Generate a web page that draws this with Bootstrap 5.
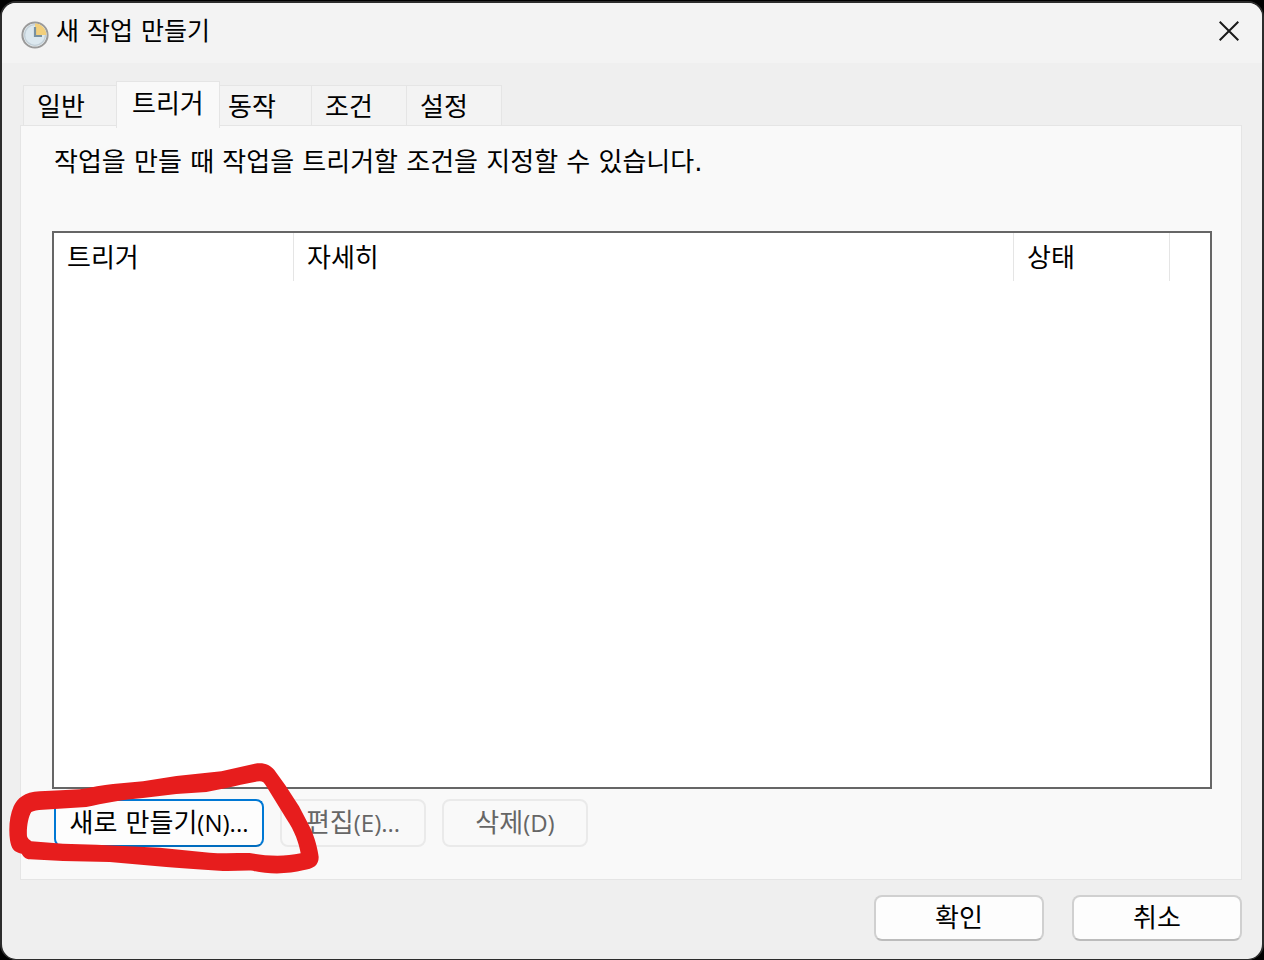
<!DOCTYPE html>
<html lang="ko">
<head>
<meta charset="utf-8">
<meta name="viewport" content="width=device-width, initial-scale=1">
<title>새 작업 만들기</title>
<link href="https://cdn.jsdelivr.net/npm/bootstrap@5.3.0/dist/css/bootstrap.min.css" rel="stylesheet">
<style>
  body { background: #000; color: #000; font-family: "DejaVu Sans", "Noto Sans CJK KR", sans-serif; font-size: 26px; line-height: 32px; padding: 1px 0 0; }
  .dialog-window { min-height: calc(100vh - 1px); background: #efefef; border: 2px solid #2c2c2c; border-bottom-width: 1px; border-radius: 16px; overflow: hidden; }
  .title-bar { background: #f3f3f3; height: 60px; padding: 0 17px 0 18px; }
  .title-bar h1 { font-size: 25px; line-height: 32px; padding: 0 0 2px 6px; }
  .close-btn { width: 32px; height: 32px; margin-bottom: 4px; }
  .dialog-main { padding: 18px 20px 15px 18px; }
  .tab-strip { padding-left: 3px; border: 0; margin-bottom: -1px; }
  .tab-strip .nav-link { width: 96px; height: 41px; margin: 0 0 0 -1px; padding: 2px 13px 0; line-height: 32px; text-align: left; color: #000; background: #f3f3f3; border: 1px solid #e5e5e5; border-radius: 0; }
  .tab-strip .nav-link.first-tab { width: 94px; margin: 0; }
  .tab-strip .nav-link.after-active { width: 93px; padding-left: 8px; }
  .tab-strip .nav-link.active { position: relative; z-index: 1; width: 104px; height: 47px; padding: 0 15px 2px; margin-bottom: -2px; color: #000; background: #f9f9f9; border-color: #e5e5e5; border-bottom: 0; }
  .tab-panel { background: #f9f9f9; border: 1px solid #e5e5e5; padding: 20px 29px 32px 31px; }
  .tab-panel p { padding-left: 2px; margin-bottom: 53px; }
  .trigger-list { background: #fff; border: 2px solid #666; }
  .trigger-list table { table-layout: fixed; border-collapse: separate; border-spacing: 0; }
  .trigger-list th { height: 48px; padding: 2px 12px 0 13px; font-weight: 400; border-right: 1px solid #e5e5e5; }
  .trigger-list th:last-child { border: 0; }
  .col-trigger { width: 240px; }
  .col-state { width: 156px; }
  .col-rest { width: 40px; }
  .win-btn { font-size: 26px; line-height: 32px; color: #000; background: #fdfdfd; border: 2px solid #d0d0d0; border-bottom-color: #bcbcbc; border-radius: 8px; padding: 0; }
  .win-btn:disabled { color: #666; background: #f9f9f9; border-color: #eaeaea; opacity: 1; }
  .win-btn.default-btn { border-color: #0078d4; border-bottom-color: #006cbe; width: 210px; }
  .list-actions { padding: 10px 0 0 2px; gap: 16px; }
  .list-actions .win-btn { height: 48px; }
  .small-btn { width: 146px; }
  .latin { font-family: "Open Sans", sans-serif; font-size: 24px; }
  .dialog-footer { padding: 0 20px 18px; gap: 28px; }
  .dialog-footer .win-btn { width: 170px; height: 46px; }
  .pen-mark { left: -43px; top: -26px; pointer-events: none; z-index: 2; }
</style>
</head>
<body>
<div class="dialog-window d-flex flex-column">
  <header class="title-bar d-flex align-items-center">
    <svg class="flex-shrink-0 mt-1" width="30" height="30" viewBox="0 0 30 30" aria-hidden="true">
      <circle cx="15" cy="15" r="12.6" fill="#eef3f5" stroke="#9a9a9a" stroke-width="2"/>
      <circle cx="15" cy="15" r="10.4" fill="#dce8ef" stroke="#c3d0d8" stroke-width="1.4"/>
      <path d="M15 15V3.6A11.4 11.4 0 0 1 26.4 15Z" fill="#f2cf7c"/>
      <path d="M15 7V16H22" fill="none" stroke="#7891a0" stroke-width="2.2"/>
    </svg>
    <h1 class="m-0 fw-normal flex-grow-1">새 작업 만들기</h1>
    <button type="button" class="close-btn btn p-0 border-0 d-flex align-items-center justify-content-center" aria-label="닫기">
      <svg width="20" height="20" viewBox="0 0 20 20"><path d="M.7.7 19.3 19.3M19.3.7.7 19.3" stroke="#1a1a1a" stroke-width="2"/></svg>
    </button>
  </header>
  <main class="dialog-main flex-grow-1 d-flex flex-column">
    <div class="tab-strip nav nav-tabs align-items-end" role="tablist">
      <button type="button" class="nav-link first-tab" role="tab" aria-selected="false">일반</button>
      <button type="button" class="nav-link active" role="tab" aria-selected="true" aria-controls="triggers" id="trigger-tab">트리거</button>
      <button type="button" class="nav-link after-active" role="tab" aria-selected="false">동작</button>
      <button type="button" class="nav-link" role="tab" aria-selected="false">조건</button>
      <button type="button" class="nav-link" role="tab" aria-selected="false">설정</button>
    </div>
    <section class="tab-panel flex-grow-1 d-flex flex-column" id="triggers" role="tabpanel" aria-labelledby="trigger-tab">
      <p>작업을 만들 때 작업을 트리거할 조건을 지정할 수 있습니다.</p>
      <div class="trigger-list flex-grow-1">
        <table class="w-100">
          <colgroup><col class="col-trigger"><col><col class="col-state"><col class="col-rest"></colgroup>
          <thead><tr><th scope="col">트리거</th><th scope="col">자세히</th><th scope="col">상태</th><th></th></tr></thead>
          <tbody></tbody>
        </table>
      </div>
      <div class="list-actions d-flex position-relative">
        <button type="button" class="btn win-btn default-btn">새로 만들기<span class="latin">(N)...</span></button>
        <button type="button" class="btn win-btn small-btn" disabled>편집<span class="latin">(E)...</span></button>
        <button type="button" class="btn win-btn small-btn" disabled>삭제<span class="latin">(D)</span></button>
        <svg class="pen-mark position-absolute" width="310" height="111" viewBox="28 38 930 333" aria-hidden="true">
          <path fill="#e71d1d" fill-rule="evenodd" d="M66 310C42 306 35 294 31 270C26 235 30 195 42 168C53 145 73 125 120 123C165 121 203 119 240 117C275 112 310 103 340 101L430 93L530 77L665 63L765 40C792 35 811 43 824 59L857 105L898 168L932 233C945 260 955 300 957 320C957 345 942 355 910 360C870 371 805 373 760 361C730 360 700 363 670 362C610 359 550 353 500 350L330 335L190 332L91 327C77 326 71 319 66 310ZM95 185C85 200 80 235 82 258C83 265 91 269 95 273L190 280L290 283L480 292L630 307C665 310 710 308 750 308C790 316 850 321 903 309C898 279 886 243 860 205L800 108C794 97 789 93 780 93C745 97 711 108 680 113L620 125L530 131L430 143C370 148 310 159 260 170L130 178Q105 179 95 185Z"/>
        </svg>
      </div>
    </section>
  </main>
  <footer class="dialog-footer d-flex justify-content-end">
    <button type="button" class="btn win-btn">확인</button>
    <button type="button" class="btn win-btn">취소</button>
  </footer>
</div>
<script src="https://cdn.jsdelivr.net/npm/bootstrap@5.3.0/dist/js/bootstrap.bundle.min.js"></script>
</body>
</html>
